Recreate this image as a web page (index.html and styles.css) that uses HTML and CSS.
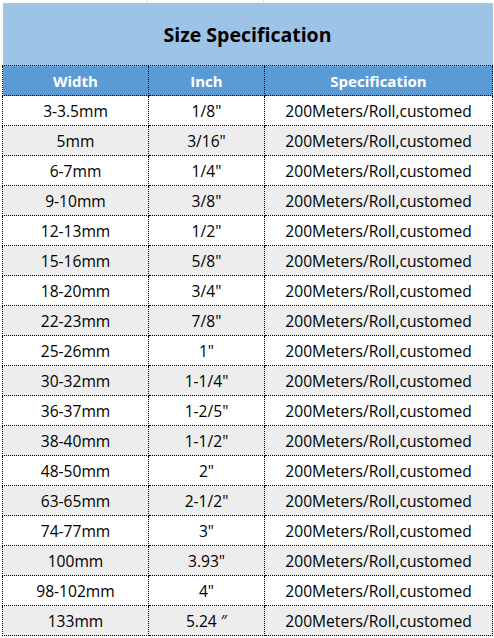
FILE: index.html
```html
<!DOCTYPE html>
<html>
<head>
<meta charset="utf-8">
<link rel="stylesheet" href="styles.css">
</head>
<body>
<div class="sheet">
  <div class="strip"><span class="c1"></span><span class="c2"></span><span class="c3"></span></div>
  <table class="spec">
    <colgroup><col class="w1"><col class="w2"><col class="w3"></colgroup>
    <tr class="title-row"><td colspan="3" class="title">Size Specification</td></tr>
    <tr class="head"><th>Width</th><th>Inch</th><th>Specification</th></tr>
    <tr><td>3-3.5mm</td><td>1/8"</td><td>200Meters/Roll,customed</td></tr>
    <tr class="alt"><td>5mm</td><td>3/16"</td><td>200Meters/Roll,customed</td></tr>
    <tr><td>6-7mm</td><td>1/4"</td><td>200Meters/Roll,customed</td></tr>
    <tr class="alt"><td>9-10mm</td><td>3/8"</td><td>200Meters/Roll,customed</td></tr>
    <tr><td>12-13mm</td><td>1/2"</td><td>200Meters/Roll,customed</td></tr>
    <tr class="alt"><td>15-16mm</td><td>5/8"</td><td>200Meters/Roll,customed</td></tr>
    <tr><td>18-20mm</td><td>3/4"</td><td>200Meters/Roll,customed</td></tr>
    <tr class="alt"><td>22-23mm</td><td>7/8"</td><td>200Meters/Roll,customed</td></tr>
    <tr><td>25-26mm</td><td>1"</td><td>200Meters/Roll,customed</td></tr>
    <tr class="alt"><td>30-32mm</td><td>1-1/4"</td><td>200Meters/Roll,customed</td></tr>
    <tr><td>36-37mm</td><td>1-2/5"</td><td>200Meters/Roll,customed</td></tr>
    <tr class="alt"><td>38-40mm</td><td>1-1/2"</td><td>200Meters/Roll,customed</td></tr>
    <tr><td>48-50mm</td><td>2"</td><td>200Meters/Roll,customed</td></tr>
    <tr class="alt"><td>63-65mm</td><td>2-1/2"</td><td>200Meters/Roll,customed</td></tr>
    <tr><td>74-77mm</td><td>3"</td><td>200Meters/Roll,customed</td></tr>
    <tr class="alt"><td>100mm</td><td>3.93"</td><td>200Meters/Roll,customed</td></tr>
    <tr><td>98-102mm</td><td>4"</td><td>200Meters/Roll,customed</td></tr>
    <tr class="alt"><td>133mm</td><td>5.24 ″</td><td>200Meters/Roll,customed</td></tr>
  </table>
</div>
</body>
</html>
```
FILE: styles.css
```css
html, body {
  margin: 0;
  padding: 0;
  background: #ffffff;
}
.sheet {
  width: 494px;
  font-family: "Open Sans", "Noto Sans", "Liberation Sans", sans-serif;
  color: #000;
}
.strip {
  display: flex;
  height: 3px;
  padding-left: 2px;
}
.strip span {
  display: block;
  height: 3px;
  box-sizing: border-box;
  border-right: 1px solid #dcdcdc;
}
.strip .c1 { width: 146px; }
.strip .c2 { width: 116px; }
.strip .c3 { width: 228px; border-right: none; }
.spec {
  margin-left: 2px;
  border-collapse: collapse;
  table-layout: fixed;
  width: 490px;
}
.w1 { width: 146px; }
.w2 { width: 116px; }
.w3 { width: 228px; }
.spec td, .spec th {
  height: 29px;
  padding: 0;
  text-align: center;
  vertical-align: middle;
  font-size: 15.6px;
  border: 1px dotted #000;
  white-space: nowrap;
}
.spec .title-row td {
  height: 62px;
  border: none;
  border-bottom: 1px dotted #000;
  background: #9dc3e6;
  font-size: 19.5px;
  font-weight: 700;
  color: #000;
  padding-top: 0;
}
.spec .head th {
  background: #5b9bd5;
  color: #fff;
  font-weight: 700;
  font-size: 15px;
}
.spec .alt td {
  background: #ededed;
}
```
